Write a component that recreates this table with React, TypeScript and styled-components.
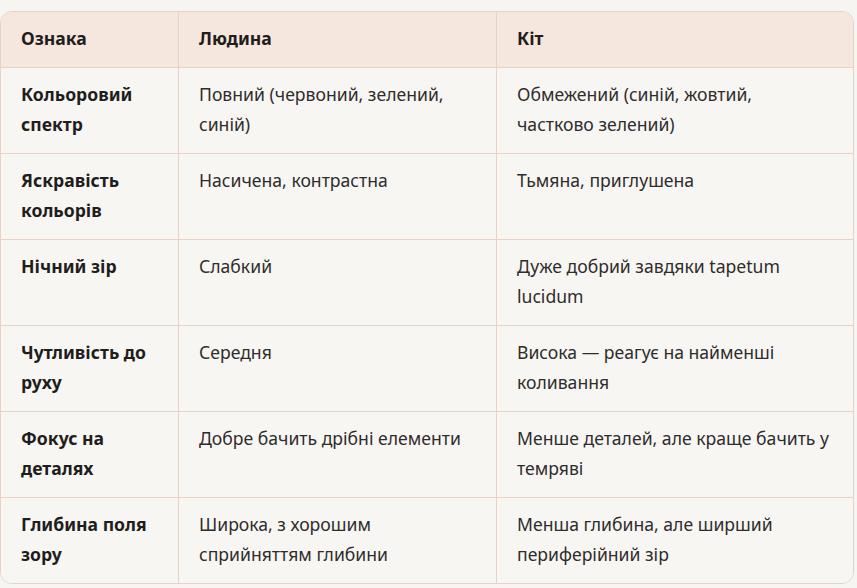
import React from "react";
import styled, { createGlobalStyle } from "styled-components";

const GlobalStyle = createGlobalStyle`
  html, body {
    margin: 0;
    padding: 0;
    background: #f7f5f2;
  }
  body {
    font-family: "Noto Sans", "Open Sans", sans-serif;
    color: #2b2a28;
  }
`;

const Page = styled.div`
  padding: 11px 3px 0 0;
`;

const Table = styled.table`
  width: 854px;
  border-collapse: separate;
  border-spacing: 0;
  border: 1px solid #e6d3c6;
  border-radius: 12px;
  overflow: hidden;
  table-layout: fixed;
  font-size: 17.6px;
  line-height: 30px;
`;

const HeadCell = styled.th<{ last?: boolean }>`
  background: #f5e7de;
  text-align: left;
  font-weight: 700;
  color: #1f1e1c;
  padding: 11px 20px 14px 20px;
  border-bottom: 1px solid #e6d3c6;
  border-right: ${({ last }) => (last ? "none" : "1px solid #e6d3c6")};
`;

const Cell = styled.td<{ bold?: boolean; last?: boolean; end?: boolean }>`
  background: #f8f6f3;
  vertical-align: top;
  padding: 11px 20px 14px 20px;
  height: 60px;
  font-weight: ${({ bold }) => (bold ? 700 : 400)};
  color: ${({ bold }) => (bold ? "#1f1e1c" : "#2e2d2b")};
  border-bottom: ${({ end }) => (end ? "none" : "1px solid #e6d3c6")};
  border-right: ${({ last }) => (last ? "none" : "1px solid #e6d3c6")};
`;

const rows: [string, string, string][] = [
  ["Кольоровий спектр", "Повний (червоний, зелений, синій)", "Обмежений (синій, жовтий, частково зелений)"],
  ["Яскравість кольорів", "Насичена, контрастна", "Тьмяна, приглушена"],
  ["Нічний зір", "Слабкий", "Дуже добрий завдяки tapetum lucidum"],
  ["Чутливість до руху", "Середня", "Висока — реагує на найменші коливання"],
  ["Фокус на деталях", "Добре бачить дрібні елементи", "Менше деталей, але краще бачить у темряві"],
  ["Глибина поля зору", "Широка, з хорошим сприйняттям глибини", "Менша глибина, але ширший периферійний зір"],
];

export default function App() {
  return (
    <>
      <GlobalStyle />
      <Page>
        <Table>
          <colgroup>
            <col style={{ width: 178 }} />
            <col style={{ width: 318 }} />
            <col />
          </colgroup>
          <thead>
            <tr>
              <HeadCell>Ознака</HeadCell>
              <HeadCell>Людина</HeadCell>
              <HeadCell last>Кіт</HeadCell>
            </tr>
          </thead>
          <tbody>
            {rows.map(([sign, human, cat], i) => {
              const end = i === rows.length - 1;
              return (
                <tr key={sign}>
                  <Cell bold end={end}>{sign}</Cell>
                  <Cell end={end}>{human}</Cell>
                  <Cell last end={end}>{cat}</Cell>
                </tr>
              );
            })}
          </tbody>
        </Table>
      </Page>
    </>
  );
}
